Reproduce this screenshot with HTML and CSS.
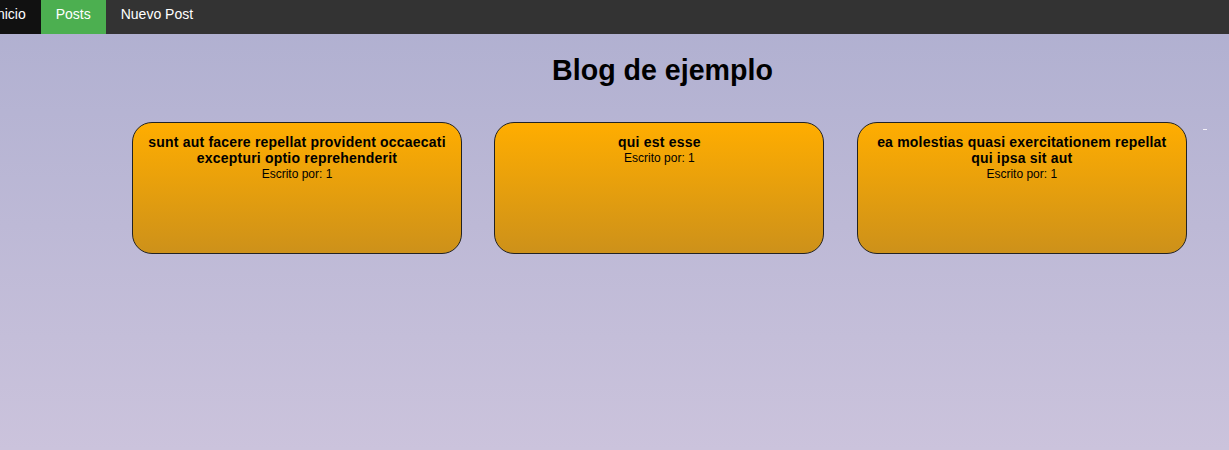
FILE: index.html
```html
<!DOCTYPE html>
<html lang="es">
<head>
<meta charset="utf-8">
<title>Blog de ejemplo</title>
<link rel="stylesheet" href="styles.css">
</head>
<body>
<nav class="topnav">
  <a class="nav-item nav-home" href="#">Inicio</a>
  <a class="nav-item nav-active" href="#">Posts</a>
  <a class="nav-item" href="#">Nuevo Post</a>
</nav>
<main class="content">
  <h1 class="page-title">Blog de ejemplo</h1>
  <div class="cards">
    <div class="card">
      <h3 class="card-title">sunt aut facere repellat provident occaecati excepturi optio reprehenderit</h3>
      <p class="card-author">Escrito por: 1</p>
    </div>
    <div class="card">
      <h3 class="card-title">qui est esse</h3>
      <p class="card-author">Escrito por: 1</p>
    </div>
    <div class="card">
      <h3 class="card-title">ea molestias quasi exercitationem repellat qui ipsa sit aut</h3>
      <p class="card-author">Escrito por: 1</p>
    </div>
    <span class="dash"></span>
  </div>
</main>
</body>
</html>
```
FILE: styles.css
```css
html, body {
  margin: 0;
  padding: 0;
  min-height: 100%;
}
body {
  font-family: "Liberation Sans", Arial, sans-serif;
  background: linear-gradient(to bottom, #afafd0 0%, #cbc3dc 100%);
  min-height: 450px;
  overflow: hidden;
}
.topnav {
  display: flex;
  height: 34px;
  background: #333333;
}
.nav-item {
  display: block;
  color: #ffffff;
  text-decoration: none;
  font-size: 14px;
  line-height: 29px;
  padding: 0 15px 5px;
}
.nav-home {
  background: #111111;
  margin-left: -22px;
}
.nav-active {
  background: #4caf50;
}
.content {
  padding: 0;
}
.page-title {
  margin: 0;
  padding: 18px 0 0 96px;
  text-align: center;
  font-size: 28.6px;
  line-height: 36px;
  font-weight: bold;
  color: #000;
}
.cards {
  display: flex;
  gap: 32.4px;
  padding-left: 132px;
  margin-top: 34px;
  align-items: flex-start;
}
.card {
  box-sizing: border-box;
  width: 330px;
  height: 132px;
  border: 1px solid #222;
  border-radius: 20px;
  background: linear-gradient(to bottom, #ffad00 0%, #cd911a 100%);
  padding: 11px 10px;
  text-align: center;
}
.card-title {
  margin: 0;
  font-size: 14px;
  line-height: 16px;
  font-weight: bold;
  letter-spacing: 0.2px;
  color: #000;
}
.card-author {
  margin: 0;
  font-size: 12px;
  line-height: 16px;
  color: #000;
}
.dash {
  display: block;
  width: 4px;
  height: 1px;
  margin-top: 7px;
  margin-left: -16px;
  background: #f4f0f8;
}
```
